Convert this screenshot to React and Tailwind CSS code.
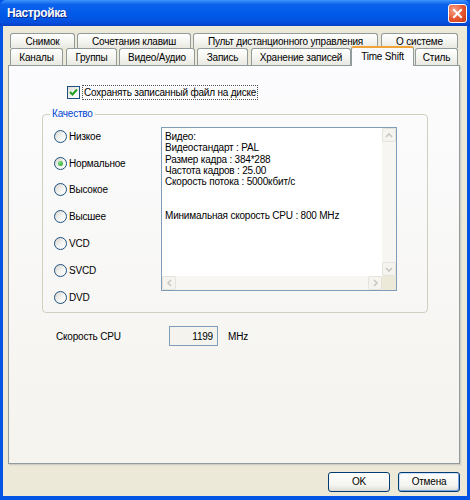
import React from "react";

const backTabs = [
  { label: "Снимок", w: "w-[65px]", gap: "mr-[2px]" },
  { label: "Сочетания клавиш", w: "w-[114px]", gap: "mr-[2px]" },
  { label: "Пульт дистанционного управления", w: "w-[185px]", gap: "mr-[3px]" },
  { label: "О системе", w: "w-[77px]", gap: "" },
];

const frontTabs = [
  { label: "Каналы", w: "w-[53px]", gap: "mr-[3px]" },
  { label: "Группы", w: "w-[51px]", gap: "mr-[2px]" },
  { label: "Видео/Аудио", w: "w-[76px]", gap: "mr-[2px]" },
  { label: "Запись", w: "w-[51px]", gap: "mr-[3px]" },
  { label: "Хранение записей", w: "w-[100px]", gap: "" },
  { label: "Time Shift", w: "w-[63px]", gap: "", active: true },
  { label: "Стиль", w: "w-[43px]", gap: "ml-[1px]" },
];

const qualities = ["Низкое", "Нормальное", "Высокое", "Высшее", "VCD", "SVCD", "DVD"];

const infoLines = [
  "Видео:",
  "Видеостандарт : PAL",
  "Размер кадра : 384*288",
  "Частота кадров : 25.00",
  "Скорость потока : 5000кбит/с",
  "",
  "",
  "Минимальная скорость CPU : 800 MHz",
];

function Tab({ tab }) {
  if (tab.active) {
    return (
      <div
        className={`${tab.w} relative z-10 h-[20px] -mb-[1px] flex items-start justify-center pt-[3px] rounded-t-[3px] border-x border-t-2 border-x-[#919b9c] border-t-[#f0a43a] bg-[#fcfcfe] leading-[12px]`}
      >
        {tab.label}
      </div>
    );
  }
  return (
    <div
      className={`${tab.w} ${tab.gap} h-full flex items-center justify-center pt-[1px] rounded-t-[3px] border-x border-t border-[#919b9c] bg-[linear-gradient(to_bottom,#ffffff,#f3f3ef_60%,#e9e8e1)] leading-[12px]`}
    >
      {tab.label}
    </div>
  );
}

function Radio({ label, checked }) {
  return (
    <div className="h-[26.8px] flex items-center gap-[2px]">
      <div className="w-[13px] h-[13px] rounded-full border border-[#1c5180] bg-[linear-gradient(135deg,#d6d5cf,#f4f4f1_55%,#ffffff)] flex items-center justify-center">
        {checked ? (
          <div className="w-[5px] h-[5px] rounded-full bg-[radial-gradient(circle_at_35%_35%,#7de07d,#21a121)]" />
        ) : null}
      </div>
      <span>{label}</span>
    </div>
  );
}

function ArrowButton({ dir }) {
  const paths = {
    up: "M2 7 L5 4 L8 7",
    down: "M2 4 L5 7 L8 4",
    left: "M7 2 L4 5 L7 8",
    right: "M4 2 L7 5 L4 8",
  };
  return (
    <div className="w-[14px] h-[14px] flex items-center justify-center rounded-[2px] border border-[#e4e3dc] bg-[#f5f4ef]">
      <svg width="10" height="10" viewBox="0 0 10 10">
        <path d={paths[dir]} fill="none" stroke="#c9c8c0" strokeWidth="1.6" />
      </svg>
    </div>
  );
}

export default function App() {
  return (
    <div className="w-[470px] h-[500px] flex flex-col bg-[#0054e3] font-['Liberation_Sans',Arial,sans-serif] text-[10px] tracking-[-0.2px] text-black select-none">
      {/* title bar */}
      <div className="h-[26px] shrink-0 flex items-center justify-between pl-[7px] pr-[3px] rounded-t-[6px] bg-[linear-gradient(to_bottom,#3f93fb,#0a62ec_18%,#0058e8_60%,#0650de_85%,#0040c8)]">
        <span className="text-white font-bold text-[12px] tracking-[-0.4px] [text-shadow:1px_1px_0_#0a2a8a]">Настройка</span>
        <div className="w-[19px] h-[19px] rounded-[3px] border border-white bg-[radial-gradient(circle_at_30%_30%,#f5a38a,#e5552e_55%,#c63a16)] flex items-center justify-center">
          <svg width="11" height="11" viewBox="0 0 11 11">
            <path d="M2 2 L9 9 M9 2 L2 9" stroke="#ffffff" strokeWidth="2" strokeLinecap="square" />
          </svg>
        </div>
      </div>

      {/* body */}
      <div className="flex-1 mx-[3px] mb-[4px] bg-[#ece9d8] flex flex-col pt-[7px] px-[5px]">
        <div className="h-[15px] flex pl-[2px]">
          {backTabs.map((t) => (
            <Tab key={t.label} tab={t} />
          ))}
        </div>
        <div className="h-[17px] flex items-end pl-[2px]">
          {frontTabs.map((t) => (
            <Tab key={t.label} tab={t} />
          ))}
        </div>

        {/* tab page */}
        <div className="w-[452px] h-[399px] border border-[#919b9c] shadow-[1px_1px_0_#d0cfc6,2px_2px_0_#e2e0d4] bg-[linear-gradient(to_bottom,#fcfcfe,#f4f3ee)] flex flex-col">
          <div className="mt-[19px] ml-[58px] flex items-center gap-[2px]">
            <div className="w-[13px] h-[13px] border border-[#1c5180] bg-[linear-gradient(135deg,#dcdbd5,#f6f6f3_60%,#ffffff)] flex items-center justify-center">
              <svg width="11" height="11" viewBox="0 0 11 11">
                <path d="M2 5 L4.5 7.5 L9 2.5" fill="none" stroke="#21a121" strokeWidth="2" />
              </svg>
            </div>
            <span className="px-[1px] py-[1px] border border-dotted border-[#555] leading-[11px]">
              Сохранять записанный файл на диске
            </span>
          </div>

          {/* quality group */}
          <div className="relative mt-[14px] ml-[33px] w-[386px] h-[199px] border border-[#d0d0bf] rounded-[4px] flex">
            <span className="absolute -top-[7px] left-[7px] px-[2px] text-[#0046d5] bg-[#fafafa] leading-[12px]">Качество</span>
            <div className="w-[118px] pl-[11px] pt-[8px] flex flex-col">
              {qualities.map((q) => (
                <Radio key={q} label={q} checked={q === "Нормальное"} />
              ))}
            </div>
            <div className="mt-[12px] w-[236px] h-[164px] border border-[#7f9db9] bg-white grid grid-cols-[1fr_14px] grid-rows-[1fr_14px]">
              <div className="pl-[3px] pt-[3px]">
                {infoLines.map((line, i) => (
                  <div key={i} className="h-[11.33px] leading-[11.33px]">{line}</div>
                ))}
              </div>
              <div className="bg-[#f7f6f2] flex flex-col justify-between">
                <ArrowButton dir="up" />
                <ArrowButton dir="down" />
              </div>
              <div className="bg-[#f7f6f2] flex justify-between">
                <ArrowButton dir="left" />
                <ArrowButton dir="right" />
              </div>
              <div className="bg-[#ece9d8]" />
            </div>
          </div>

          {/* cpu row */}
          <div className="mt-[13px] h-[20px] flex items-center">
            <span className="ml-[47px] w-[113px]">Скорость CPU</span>
            <div className="w-[49px] h-[20px] border border-[#7f9db9] bg-[#f4f3ee] flex items-center justify-end pr-[4px]">
              1199
            </div>
            <span className="ml-[10px]">MHz</span>
          </div>
        </div>

        {/* buttons */}
        <div className="mt-[8px] flex justify-end gap-[8px] pr-[2px]">
          <button className="w-[62px] h-[20px] rounded-[3px] border border-[#003c74] bg-[linear-gradient(to_bottom,#ffffff,#f3f3ef_70%,#dcdbd3)] text-[10px] leading-none">
            OK
          </button>
          <button className="w-[62px] h-[20px] rounded-[3px] border border-[#003c74] shadow-[inset_-1px_-1px_0_#7ea3e4,inset_1px_1px_0_#cfe0fb] bg-[linear-gradient(to_bottom,#ffffff,#f3f3ef_70%,#dcdbd3)] text-[10px] leading-none">
            Отмена
          </button>
        </div>
      </div>
    </div>
  );
}
